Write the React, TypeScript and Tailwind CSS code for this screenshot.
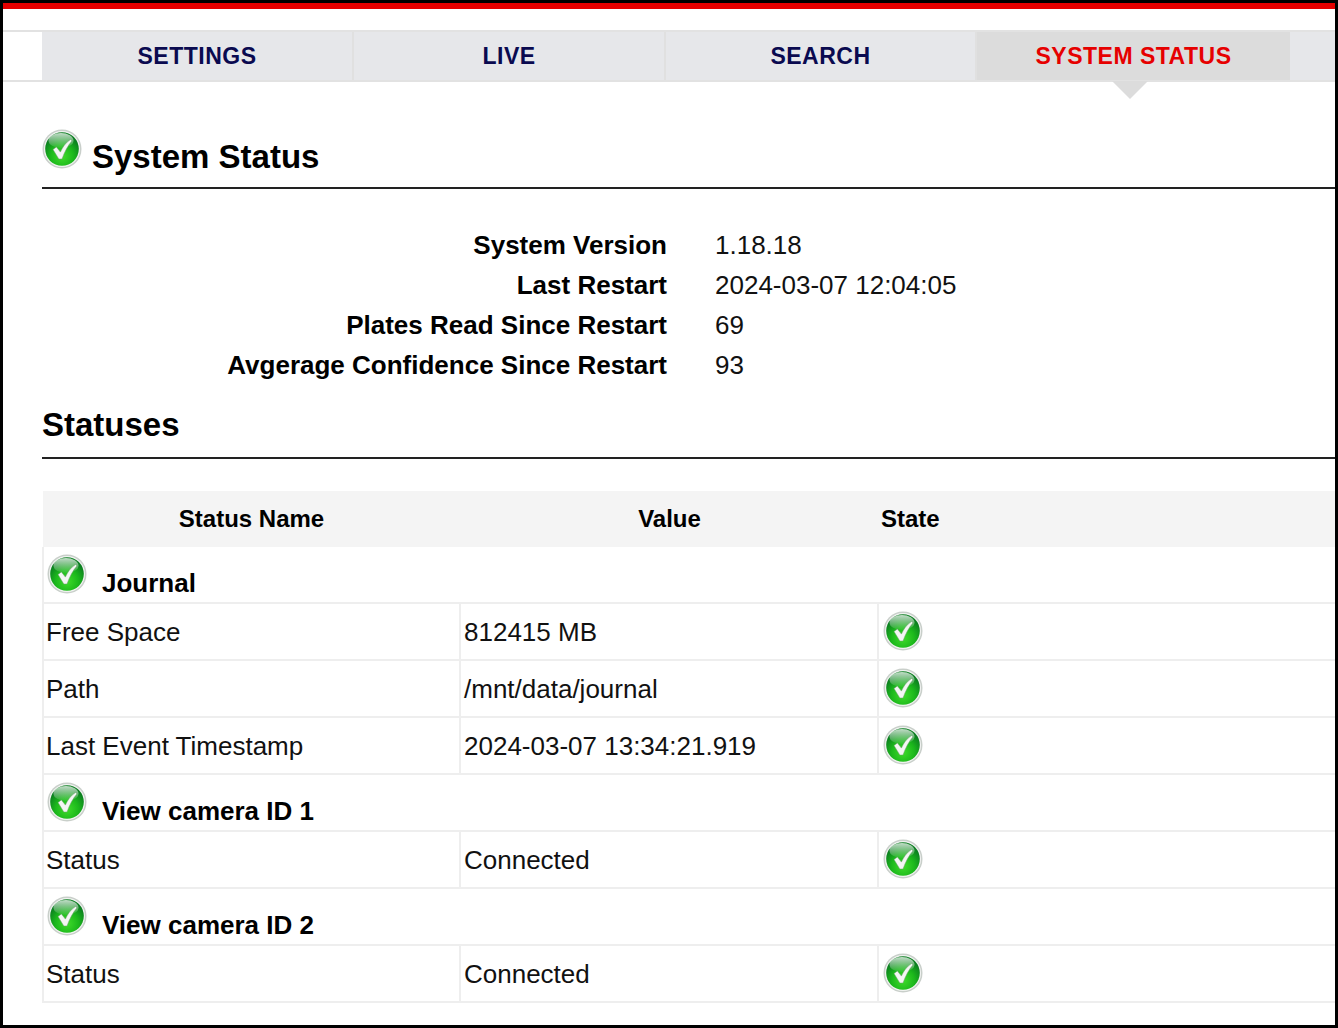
import { useId } from "react";

const tabs = [
  { label: "SETTINGS", width: "w-[312px]", active: false },
  { label: "LIVE", width: "w-[312px]", active: false },
  { label: "SEARCH", width: "w-[311px]", active: false },
  { label: "SYSTEM STATUS", width: "w-[313px]", active: true },
];

const summary = [
  ["System Version", "1.18.18"],
  ["Last Restart", "2024-03-07 12:04:05"],
  ["Plates Read Since Restart", "69"],
  ["Avgerage Confidence Since Restart", "93"],
];

const groups = [
  {
    name: "Journal",
    rows: [
      ["Free Space", "812415 MB"],
      ["Path", "/mnt/data/journal"],
      ["Last Event Timestamp", "2024-03-07 13:34:21.919"],
    ],
  },
  { name: "View camera ID 1", rows: [["Status", "Connected"]] },
  { name: "View camera ID 2", rows: [["Status", "Connected"]] },
];

// Glossy green tick used for every OK state
function OkIcon() {
  const id = useId();
  return (
    <svg width="40" height="40" viewBox="0 0 40 40" className="block shrink-0">
      <defs>
        <radialGradient id={`${id}-ball`} cx="50%" cy="72%" r="62%">
          <stop offset="0%" stopColor="#3fdc2a" />
          <stop offset="55%" stopColor="#1cb81c" />
          <stop offset="100%" stopColor="#0b7d20" />
        </radialGradient>
        <linearGradient id={`${id}-shine`} x1="0" y1="0" x2="0" y2="1">
          <stop offset="0%" stopColor="#ffffff" stopOpacity="0.75" />
          <stop offset="100%" stopColor="#ffffff" stopOpacity="0.05" />
        </linearGradient>
      </defs>
      <circle cx="20" cy="20" r="19.5" fill="#c9cfca" />
      <circle cx="20" cy="20" r="18" fill="#f2f4f2" />
      <circle cx="20" cy="20" r="16.8" fill={`url(#${id}-ball)`} />
      <ellipse cx="19" cy="11.5" rx="12.5" ry="7.5" fill={`url(#${id}-shine)`} />
      <path
        d="M11 20.5l3.4-2.6 4 5.2C20.6 18 23.800 13.500 28.500 10.500l1.500 1.300C25.500 17 22.500 23 20 30h-3.200z"
        fill="#f4f6f4"
        stroke="#6d9c6d"
        strokeWidth="0.5"
      />
    </svg>
  );
}

function GroupRow({ name }: { name: string }) {
  return (
    <div className="flex h-[57px] border-b-2 border-l-2 border-[#eeeeee] pl-[3px]">
      <div className="pt-[7px]">
        <OkIcon />
      </div>
      <div className="ml-[15px] pt-[21px] text-[26px] leading-[30px] font-bold text-black">{name}</div>
    </div>
  );
}

function ValueRow({ label, value }: { label: string; value: string }) {
  return (
    <div className="flex h-[57px] border-b-2 border-l-2 border-[#eeeeee] text-[26px] leading-[30px] text-[#111111]">
      <div className="w-[417px] shrink-0 border-r-2 border-[#eeeeee] pt-[13px] pl-[2px]">{label}</div>
      <div className="w-[418px] shrink-0 border-r-2 border-[#eeeeee] pt-[13px] pl-[3px]">{value}</div>
      <div className="pt-[7px] pl-[4px]">
        <OkIcon />
      </div>
    </div>
  );
}

export default function App() {
  return (
    <div className="h-[1028px] w-[1338px] overflow-hidden border-3 border-black bg-white font-['Liberation_Sans',Arial,sans-serif]">
      <div className="h-[6px] bg-[#e60000]" />

      <nav className="mt-[21px] flex h-[52px] border-y-2 border-[#e2e2e2]">
        <div className="w-[39px] shrink-0" />
        {tabs.map((tab) => (
          <div
            key={tab.label}
            className={
              tab.active
                ? `relative flex shrink-0 items-center justify-center bg-[#dcdcdc] text-[23px] font-bold tracking-[0.5px] text-[#e60000] ${tab.width}`
                : `flex shrink-0 items-center justify-center border-r-2 border-[#e0e0e0] bg-[#e6e7ea] text-[23px] font-bold tracking-[0.5px] text-[#0a0a50] ${tab.width}`
            }
          >
            {tab.label}
            {tab.active && (
              <span className="absolute top-full left-[135px] mt-[1px] h-0 w-0 border-x-[18px] border-t-[18px] border-x-transparent border-t-[#dcdcdc]" />
            )}
          </div>
        ))}
        <div className="flex-1 bg-[#e6e7ea]" />
      </nav>

      <main className="pl-[39px]">
        <div className="mt-[47px] flex h-[60px] border-b-2 border-[#222222]">
          <OkIcon />
          <h1 className="mt-[9px] ml-[10px] text-[33px] leading-[38px] font-bold text-black">System Status</h1>
        </div>

        <div className="mt-[36px] flex flex-col">
          {summary.map(([label, value]) => (
            <div key={label} className="flex h-[40px] text-[26px] leading-[40px]">
              <div className="w-[625px] shrink-0 text-right font-bold text-black">{label}</div>
              <div className="ml-[48px] text-[#111111]">{value}</div>
            </div>
          ))}
        </div>

        <h2 className="mt-[21px] h-[53px] border-b-2 border-[#222222] text-[33px] leading-[38px] font-bold text-black">
          Statuses
        </h2>

        <div className="mt-[32px]">
          <div className="ml-[1px] flex h-[56px] items-center bg-[#f4f4f4] text-[24px] font-bold text-black">
            <div className="w-[417px] shrink-0 text-center">Status Name</div>
            <div className="w-[419px] shrink-0 text-center">Value</div>
            <div className="pl-[2px]">State</div>
          </div>
          {groups.map((group) => (
            <div key={group.name}>
              <GroupRow name={group.name} />
              {group.rows.map(([label, value]) => (
                <ValueRow key={label} label={label} value={value} />
              ))}
            </div>
          ))}
        </div>
      </main>
    </div>
  );
}
